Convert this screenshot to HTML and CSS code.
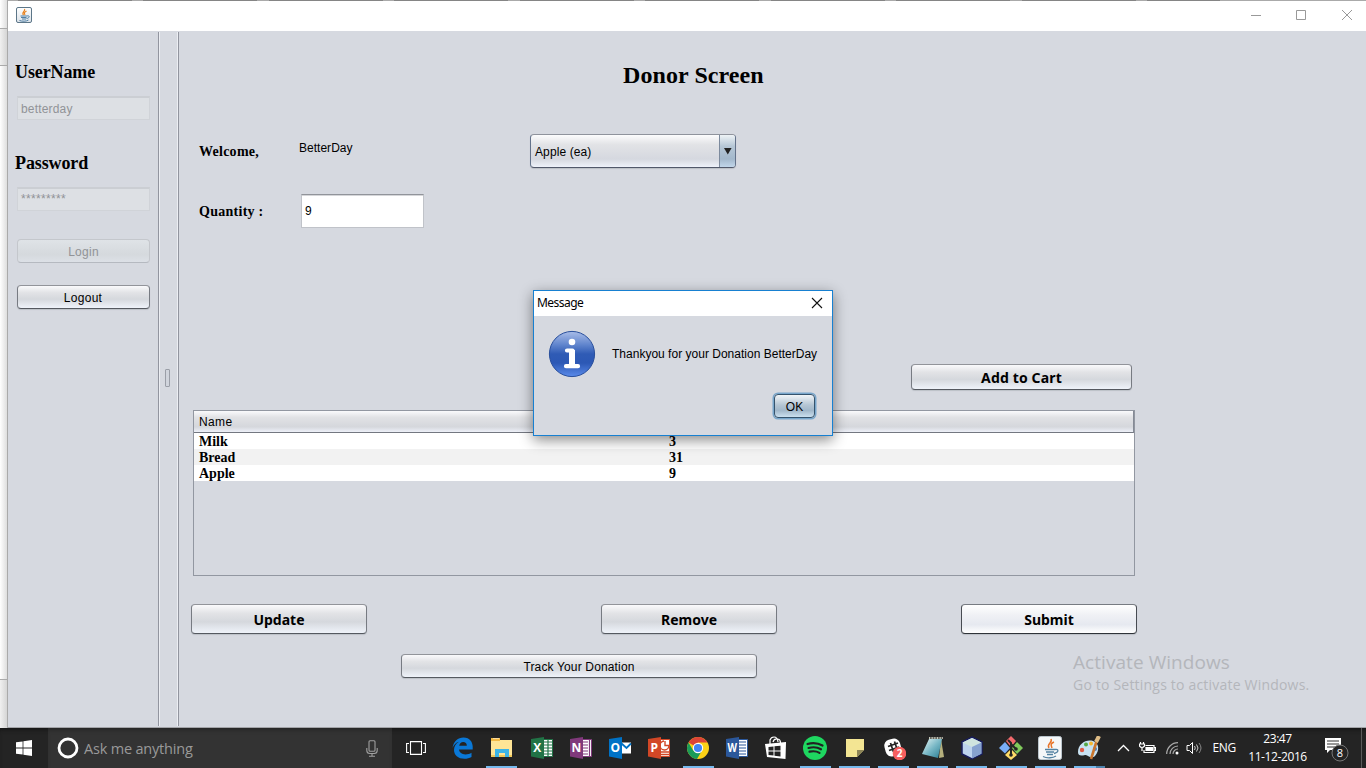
FILE: index.html
```html
<!DOCTYPE html>
<html lang="en">
<head>
<meta charset="utf-8">
<title>Donor Screen</title>
<link rel="stylesheet" href="styles.css">
</head>
<body>
<div class="desktop">
  <div class="strip"><div class="strip-top"></div><div class="strip-bar"></div><div class="strip-body"></div><div class="strip-foot"></div></div>
  <div class="window">
    <div class="tabs-edge"></div>
    <header class="titlebar">
      <svg class="java-small" viewBox="0 0 32 32" width="16" height="16"><defs><linearGradient id="jb" x2="0" y2="1"><stop stop-color="#fff"/><stop offset="1" stop-color="#dbe2e8"/></linearGradient></defs><rect x="1" y="1" width="30" height="30" rx="3" fill="url(#jb)" stroke="#5c7688" stroke-width="2"/><path d="M17 4c3 4-7 6-2 12M21 8c-5 3-5 4-3 8" fill="none" stroke="#e8821e" stroke-width="2.4"/><path d="M9 18h13M10 21h11M12 24h8M22 18c7-2 5 5-1 5M7 27c5 2 14 2 18-1" fill="none" stroke="#4f7fa5" stroke-width="2"/></svg>
      <svg class="controls" width="112" height="12" viewBox="0 0 112 12" fill="none" stroke="#999"><path d="M1 6.5h10M46.5 1.5h9v9h-9z"/><path d="M92 1l10 10M102 1l-10 10"/></svg>
    </header>
    <div class="content">
      <aside class="sidebar">
        <h2>UserName</h2>
        <div class="field off">betterday</div>
        <h2 class="second">Password</h2>
        <div class="field off stars">*********</div>
        <button class="btn small off">Login</button>
        <button class="btn small logout">Logout</button>
      </aside>
      <div class="splitter"><span class="grip"></span></div>
      <main class="main">
        <h1>Donor Screen</h1>
        <div class="row welcome"><b>Welcome,</b><span class="user">BetterDay</span><div class="combo"><span>Apple (ea)</span><i><svg width="8" height="7"><path d="M0 0h7.6L3.8 6.5z" fill="#222"/></svg></i></div></div>
        <div class="row quantity"><b>Quantity :</b><div class="input">9</div></div>
        <div class="cart"><button class="btn big">Add to Cart</button></div>
        <div class="table">
          <div class="thead"><span>Name</span></div>
          <div class="tr"><span>Milk</span><span>3</span></div>
          <div class="tr alt"><span>Bread</span><span>31</span></div>
          <div class="tr"><span>Apple</span><span>9</span></div>
        </div>
        <div class="actions"><button class="btn big">Update</button><button class="btn big">Remove</button><button class="btn big bright">Submit</button></div>
        <button class="btn small track">Track Your Donation</button>
      </main>
    </div>
    <div class="watermark"><div class="wm1">Activate Windows</div><div class="wm2">Go to Settings to activate Windows.</div></div>
    <section class="dialog">
      <div class="dialog-title"><span>Message</span><svg width="12" height="12" fill="none" stroke="#111" stroke-width="1.1"><path d="M1 1l10 10M11 1L1 11"/></svg></div>
      <div class="dialog-body">
        <svg width="48" height="48" viewBox="0 0 48 48"><defs><linearGradient id="ig" x2="0" y2="1"><stop stop-color="#a9bde8"/><stop offset=".3" stop-color="#5f84cd"/><stop offset=".5" stop-color="#2f5bb5"/><stop offset=".7" stop-color="#2c58b5"/><stop offset="1" stop-color="#5b8bea"/></linearGradient></defs><circle cx="24" cy="24" r="22.6" fill="url(#ig)" stroke="#294f9c"/><circle cx="24" cy="12" r="3.3" fill="#fff"/><path d="M19 20.5h5.500V36M18 36.2h12" fill="none" stroke="#fff" stroke-width="4.2" stroke-linecap="round" stroke-linejoin="round"/><path d="M24 20v16" stroke="#fff" stroke-width="6"/></svg>
        <span class="msg">Thankyou for your Donation BetterDay</span>
      </div>
      <div class="dialog-foot"><button class="btn small ok">OK</button></div>
    </section>
  </div>
  <footer class="taskbar">
    <div class="start"><svg width="16" height="16" fill="#fff"><path d="M0 2.3l6.6-.9v6.2H0zM7.4 1.2L16 0v7.6H7.4zM0 8.4h6.6v6.2L0 13.7zM7.4 8.4H16V16l-8.6-1.2z"/></svg></div>
    <div class="search"><svg width="22" height="22"><circle cx="11" cy="11" r="9" fill="none" stroke="#fff" stroke-width="2.8"/></svg><span>Ask me anything</span><svg class="mic" width="12" height="17" fill="none" stroke="#a0a0a0" stroke-width="1.1"><rect x="3" y=".7" width="6" height="10.6" rx="1"/><path d="M.8 8v2.5q0 3 3 3h4.4q3 0 3-3V8M6 13.5V16M3 16.2h6"/></svg></div>
    <div class="taskview"><svg width="20" height="14" fill="none" stroke="#fff" stroke-width="1.1"><path d="M4.5.6h11v12.800h-11zM3 2.500H.6v9H3M17 2.500h2.400v9H17"/></svg></div>
    <nav class="apps">
      <div class="app"><svg viewBox="0 0 24 24"><path d="M1.500 12C2.500 5 7 1.400 12.500 1.400c6.400 0 9.200 4.800 9.200 9.200v3H8c.2 3 3 4.800 6.300 4.800 2.600 0 4.700-.8 6.200-1.700v4.300c-2 1.200-4.500 1.800-7 1.800C7 22.800 3 19 3 14c0-3.400 1.800-6.500 5-8.200C5 6.500 2.800 9 1.500 12zM8.200 9.800h7.600c0-2.500-1.400-3.700-3.600-3.700-2.100 0-3.600 1.400-4 3.700z" fill="#0a78d7"/></svg></div>
      <div class="app on"><svg viewBox="0 0 24 24"><path d="M1 2h9v3H1z" fill="#f3ba45"/><path d="M3 3h6" stroke="#fff"/><path d="M1 4h21v17H1z" fill="#ffe596"/><path d="M1 3h9v2H1z" fill="#f3ba45"/><path d="M1 19h21v2H1z" fill="#f1c859"/><path d="M5 21v-8h14v8h-4v-4H9v4z" fill="#3db5e6"/></svg></div>
      <div class="app"><svg viewBox="0 0 24 24"><path d="M12 3.500h10.500v17H12z" fill="#fff" stroke="#217346"/><path d="M14 6h8M14 9h8M14 12h8M14 15h8M14 18h8M18 4v16" stroke="#217346" stroke-width="1.200"/><path d="M1 3l13-2v22L1 20.500z" fill="#217346"/><text x="7.300" y="16.300">X</text></svg></div>
      <div class="app"><svg viewBox="0 0 24 24"><path d="M12 3.500h10.500v17H12z" fill="#fff" stroke="#80397b"/><path d="M14 6h5M14 9h5M14 12h5M14 15h5M14 18h5M20.500 3v18" stroke="#80397b" stroke-width="1.200"/><path d="M1 3l13-2v22L1 20.500z" fill="#80397b"/><text x="7.300" y="16.300">N</text></svg></div>
      <div class="app"><svg viewBox="0 0 24 24"><path d="M12 6.500h11v11H12z" fill="#fff"/><path d="M13 7l5.500 5L23 7.500" fill="none" stroke="#0072c6" stroke-width="1.800"/><path d="M1 3l13-2v22L1 20.500z" fill="#0072c6"/><text x="7.300" y="16.300">O</text></svg></div>
      <div class="app"><svg viewBox="0 0 24 24"><path d="M12 3.500h10.500v17H12z" fill="#fff" stroke="#d24726"/><path d="M18 5v4.500h4A4.500 4.500 0 1 1 17 5M14 16h8M14 18.500h8" fill="none" stroke="#d24726" stroke-width="1.400"/><path d="M1 3l13-2v22L1 20.500z" fill="#d24726"/><text x="7.300" y="16.300">P</text></svg></div>
      <div class="app on"><svg viewBox="0 0 24 24"><circle cx="12" cy="12" r="11" fill="#fcd116"/><path d="M12 12L2.500 6.500A11 11 0 0 1 21.500 6.500H12z" fill="#dc4437"/><path d="M2.500 6.500A11 11 0 0 0 11 23l5-8.500-8.800 0z" fill="#1a9b58"/><circle cx="12" cy="12" r="5.200" fill="#fff"/><circle cx="12" cy="12" r="4.100" fill="#4285f4"/></svg></div>
      <div class="app"><svg viewBox="0 0 24 24"><path d="M12 3.500h10.500v17H12z" fill="#fff" stroke="#2b579a"/><path d="M14 6h7M14 9h7M14 12h7M14 15h7M14 18h7" stroke="#2b579a" stroke-width="1.200"/><path d="M1 3l13-2v22L1 20.500z" fill="#2b579a"/><text x="7.300" y="16.300" textLength="9.500" lengthAdjust="spacingAndGlyphs">W</text></svg></div>
      <div class="app"><svg viewBox="0 0 24 24"><path d="M6 8V4q1-3 4-3 3.500 0 4 5M9 6q1-4 5-3 2.500.5 2.500 4" fill="none" stroke="#fff" stroke-width="1.200"/><path d="M1 8l21-2-.5 17L3 21z" fill="#fff"/><path d="M4.500 11l5-.5v4h-5zM10.500 10.300l6-.6v4.800h-6zM4.500 15.500h5v4l-5-.6zM10.500 15.500h6v5l-6-.8z" fill="#242424"/></svg></div>
      <div class="app on"><svg viewBox="0 0 24 24"><circle cx="12" cy="12" r="12" fill="#1ed760"/><path d="M4.500 8q8-2.400 15 1.500M5.500 12q7-2 12.500 1.300M6.500 15.700q6-1.300 10 1.200" fill="none" stroke="#222" stroke-width="2.200" stroke-linecap="round"/></svg></div>
      <div class="app on"><svg viewBox="0 0 24 24"><path d="M3 3h18v11l-7 7H3z" fill="#f3e593"/><path d="M14 21v-7h7z" fill="#8d8557"/></svg></div>
      <div class="app on"><svg viewBox="0 0 24 24"><rect x="3" y="3" width="16" height="17" rx="6" fill="#fff" transform="rotate(-15 11 12)"/><path d="M8.500 7l3 9M12.500 5.500l3 9M6 10.500l10-3.500M7 14.500l10-3.500" stroke="#242424" stroke-width="1.700"/><circle cx="17.500" cy="17.500" r="6.800" fill="#f75f5f"/><text class="badge" x="17.500" y="21.300">2</text></svg></div>
      <div class="app on"><svg viewBox="0 0 24 24"><defs><linearGradient id="ng" x2="1" y2="1"><stop stop-color="#e8f5f5"/><stop offset=".5" stop-color="#79b8c6"/><stop offset="1" stop-color="#267b91"/></linearGradient></defs><path d="M20 3l3 18-5 1z" fill="#b5b07c"/><path d="M8 3h13l-4 19-16-4z" fill="url(#ng)"/><path d="M8 2h14" stroke="#c8c8b8" stroke-width="2" stroke-dasharray="1 .6"/></svg></div>
      <div class="app on"><svg viewBox="0 0 24 24"><path d="M2 6l10-5 10 5v12l-10 5-10-5z" fill="#bdd3ee" stroke="#171c5c" stroke-width="1.500"/><path d="M2.500 6.500L12 2l9.500 4.500L12 11z" fill="#cfe4df"/><path d="M12 11l9.500-4.500v11.300L12 22.500z" fill="#86a2cf"/></svg></div>
      <div class="app on"><svg viewBox="0 0 24 24"><path d="M12 0l5 5-5 6-5-6z" fill="#f2696c"/><path d="M6 6l5 6-5 5.500L0 12z" fill="#79aef8"/><path d="M18 6l6 6-6 6-5-6z" fill="#80c95b"/><path d="M12 13l6 6-6 5-6-5z" fill="#ffdc68"/><path d="M9 4l3 3v12M12 8l5 5" fill="none" stroke="#242424" stroke-width="2"/><circle cx="12" cy="19" r="1.800" fill="#242424"/><circle cx="17" cy="13" r="1.800" fill="#242424"/></svg></div>
      <div class="app on"><svg viewBox="0 0 24 24"><rect x=".5" y=".5" width="23" height="23" rx="2" fill="#f5f7f8" stroke="#bbc5cc"/><path d="M13 3c2 4-5 5-2 9M16 6c-4 2-3 3-2 6" fill="none" stroke="#e8752a" stroke-width="1.500"/><path d="M7 13.500h10M8 16h8M9 18.500h6M17 13.500c4-1 4 3-1 4M5 20.500c4 2 10 1.500 13-.5" fill="none" stroke="#5482a1" stroke-width="1.300"/></svg></div>
      <div class="app on multi"><svg viewBox="0 0 24 24"><path d="M1 16C1 8 9 3 16 5c6 2 7 9 2 15-5 4-7-2-10-1-4 1-7 1-7-3z" fill="#c8e2f2"/><circle cx="5" cy="14" r="2.200" fill="#e15a45"/><circle cx="9" cy="8.500" r="2" fill="#55a947"/><circle cx="14" cy="7.500" r="2" fill="#f5b730"/><circle cx="18" cy="13" r="2" fill="#477cc3"/><path d="M20 4l-6 19" stroke="#ca762e" stroke-width="2.600"/><path d="M22 0l-3 6" stroke="#dfbd87" stroke-width="4"/></svg></div>
    </nav>
    <div class="tray">
      <svg class="chev" width="13" height="8" fill="none" stroke="#fff" stroke-width="1.300"><path d="M1 7l5.500-5.500L12 7"/></svg>
      <svg class="bat" width="17" height="14" fill="none" stroke="#fff" stroke-width="1.200"><path d="M6.500 4.500h8.500v7H5V9M15 6.500h1.500v3H15"/><path d="M7 6.500h6.500v3H7z" fill="#fff"/><path d="M1.500 1v2M4.500 1v2M.5 3h5v2q-2.500 3-5 0zM3 6v4"/></svg>
      <svg class="wifi" width="13" height="13" fill="none" stroke="#aaa"><path d="M.7 12A11.300 11.300 0 0 1 12 .7M4 12a8 8 0 0 1 8-8M7 12a5 5 0 0 1 5-5" stroke-width="1.200"/><circle cx="11" cy="11" r="1.500" fill="#fff" stroke="none"/></svg>
      <svg class="vol" width="17" height="14" fill="none" stroke="#fff"><path d="M1 4.500h2.500l3-3v11l-3-3H1z"/><path d="M8.500 5q1.500 2 0 4M10.500 3.500q3 3.500 0 7" stroke="#ccc"/><path d="M13 2q4 5 0 10" stroke="#888"/></svg>
      <span class="lang">ENG</span>
      <div class="clock"><span>23:47</span><span class="date">11-12-2016</span></div>
      <svg class="action" width="26" height="26"><path d="M1 1h16v12H6l-3 3v-3H1z" fill="#fff"/><path d="M3 4h12M3 7h12M3 10h8" stroke="#333"/><circle cx="16" cy="16" r="8" fill="#242424" stroke="#777"/><text x="16" y="20">8</text></svg>
      <span class="peek"></span>
    </div>
  </footer>
</div>
</body>
</html>
```
FILE: styles.css
```css
* { box-sizing: border-box; }
body { margin: 0; overflow: hidden; font: 12px/14px "Liberation Sans", Arial, sans-serif; color: #000; }
.desktop { width: 1366px; height: 768px; display: grid; grid-template: 728px 40px / 8px 1358px; background: #fff; }
.strip { display: flex; flex-direction: column; border-right: 1px solid #aaa; background: linear-gradient(90deg, #fff, #dedede); }
.strip-top { height: 28px; }
.strip-bar { height: 38px; border: solid #aaa; border-width: 1px 0; background: linear-gradient(90deg, #f0f0f0, #d5d5d5); }
.strip-body { height: 613px; }
.strip-foot { height: 49px; border-top: 1px solid #aaa; background: linear-gradient(90deg, #f0f0f0, #d5d5d5); }
.window { position: relative; display: flex; flex-direction: column; background: #d6d9e0; border-bottom: 1px solid #a3a4a8; }
.tabs-edge { height: 1px; background: linear-gradient(#aaa, #aaa) 1212px 0 / 146px 1px no-repeat, repeating-linear-gradient(90deg, #aaa 0 10px, #858585 10px 124px, #aaa 124px 125.500px); }
.titlebar { height: 30px; background: #fff; display: flex; justify-content: space-between; padding: 6px 4px 0 8px; }
.controls { margin: 2px 0 0 0; }
.content { display: flex; height: 696px; }
.sidebar { width: 150px; padding: 31px 8px 0 7px; }
h1, h2 { font-family: "Liberation Serif", "Times New Roman", serif; font-weight: bold; margin: 0; }
h2 { font-size: 18px; line-height: 20px; letter-spacing: -.12px; }
.field { width: 133px; height: 24px; margin: 14px 0 0 2px; padding: 4px 3px; font-size: 12px; letter-spacing: .18px; background: #dde0e4; border: 1px solid #d0d3d8; border-top: 2px solid #cbced3; color: #919397; line-height: 14px; }
.second { margin-top: 33px; }
.field.stars { letter-spacing: .33px; padding-top: 3px; }
.btn { font-family: inherit; font-size: 12px; line-height: 14px; padding: 2px 0 0; color: #000; text-align: center; border: 1px solid; border-color: #92949a #777b82 #555960; border-radius: 4px; background: linear-gradient(#fafafc, #e2e3e6 30%, #d5d8dd 60%, #eff3fa); box-shadow: 0 1px 1px #bcc0c7; }
.sidebar .btn { display: block; width: 133px; height: 24px; margin: 28px 0 0 2px; }
.btn.off { color: #919397; letter-spacing: .25px; border-color: #c4c7cc #c4c7cc #b5b9c0; background: linear-gradient(#dfe3e7, #d5d9dd 65%, #dce0e6); box-shadow: none; }
.sidebar .logout { margin-top: 22px; letter-spacing: .3px; padding-right: 1px; }
.splitter { width: 21px; height: 694px; margin-top: 1px; display: flex; align-items: center; justify-content: center; padding: 0 3px 2px 0; border: solid #92959f; border-width: 0 1px; box-shadow: inset 1px 0 #eceef3, inset -1px 0 #eceef3; }
.grip { width: 5px; height: 18px; border: 1px solid #9a9ea7; border-radius: 1px; background: #d0d4dc; }
.main { width: 1187px; padding: 30px 0 0 12px; }
h1 { font-size: 24px; line-height: 28px; width: 142px; margin-left: 432px; white-space: nowrap; letter-spacing: .08px; }
.row { display: flex; margin-left: 8px; }
.row b { font: bold 14px/17px "Liberation Serif", serif; letter-spacing: .27px; width: 100px; padding-top: 9px; }
.welcome { margin-top: 45px; height: 34px; }
.user { padding-top: 7px; width: 231px; letter-spacing: .02px; }
.combo { width: 206px; height: 34px; display: flex; border: 1px solid; border-color: #8f939c #63728a #51586a; border-radius: 4px; overflow: hidden; background: linear-gradient(#fcfcfd, #e2e3e6 30%, #d5d8df 75%, #eef2fa); box-shadow: 0 1px 1px #bbbfc6; }
.combo span { flex: 1; padding: 10px 4px; letter-spacing: .1px; }
.combo i { width: 16px; border-left: 1px solid #7c8a9d; background: linear-gradient(#eef3f6, #b6c7d6 35%, #a3b8cc 75%, #c1d6ea); display: flex; align-items: center; justify-content: center; }
.quantity { margin-top: 26px; height: 34px; }
.input { width: 123px; height: 34px; margin-left: 2px; padding: 9px 3px; background: #fff; border: 1px solid #c0c3c9; border-top-color: #91949a; box-shadow: inset 0 1px #d5d6d9; line-height: 14px; }
.cart { margin: 136px 0 0 720px; }
.btn.big { width: 176px; height: 30px; font: bold 14px/18px "Noto Sans", sans-serif; }
.cart .btn.big { width: 221px; height: 26px; display: block; letter-spacing: .15px; }
.table { width: 942px; height: 166px; margin: 20px 0 0 2px; border: 1px solid #9297a1; }
.thead { height: 22px; padding: 4px 5px; border-bottom: 1px solid #737780; border-right: 1px solid #858a95; background: linear-gradient(#fafafc, #e1e2e5 30%, #d5d7dc 75%, #edf0f8); letter-spacing: .35px; }
.tr { display: grid; grid-template-columns: 470px 1fr; height: 16px; padding-left: 5px; background: #fff; font: bold 14px/18px "Liberation Serif", serif; }
.tr.alt { background: #f2f2f2; }
.actions { display: flex; margin-top: 28px; }
.actions .btn:nth-child(2) { margin-left: 234px; }
.actions .btn:nth-child(3) { margin-left: 184px; }
.btn.bright { border-color: #777b82 #474b52 #2f3339; background: linear-gradient(#fff, #f0f1f5 35%, #e6e9f0 70%, #fff); }
.track { width: 356px; height: 24px; display: block; margin: 20px 0 0 210px; letter-spacing: .15px; }
.watermark { position: absolute; left: 1065px; top: 649px; color: #b4b6bb; font-family: "Open Sans", sans-serif; white-space: nowrap; }
.wm1 { font-size: 19px; line-height: 26px; letter-spacing: .06px; }
.wm2 { font-size: 14px; line-height: 20px; letter-spacing: .2px; }
.dialog { position: absolute; left: 525px; top: 290px; width: 300px; height: 146px; background: #d6d9e0; border: 1px solid #1780d1; box-shadow: 0 4px 13px #0007; }
.dialog-title { height: 25px; background: #fff; display: flex; justify-content: space-between; padding: 5px 9px 0 3px; font: 12px/14px "Noto Sans", sans-serif; letter-spacing: -.55px; }
.dialog-title svg { margin-top: 1px; }
.dialog-body { display: flex; align-items: center; gap: 16px; padding: 14px 0 0 14px; }
.msg { white-space: nowrap; letter-spacing: .01px; }
.dialog-foot { display: flex; justify-content: flex-end; padding: 16px 17px 0 0; }
.ok { width: 41px; height: 24px; border-color: #35536d; background: linear-gradient(#f2f5f8, #b5c6d4 45%, #a1b7ca 70%, #cbe0ef); box-shadow: 0 0 0 1.500px #78a6cb; }
.taskbar { grid-column: 1 / 3; display: flex; background: #242424; color: #fff; font-family: "Open Sans", sans-serif; box-shadow: inset 0 4px 5px -3px #111; }
.start { width: 48px; display: flex; align-items: center; justify-content: center; }
.search { width: 344px; background: #333; display: flex; align-items: center; padding: 0 14px 0 9px; color: #999; font-size: 14.500px; line-height: 20px; box-shadow: inset 0 4px 5px -3px #222; }
.search span { margin: 2px 0 0 5px; white-space: nowrap; letter-spacing: -.19px; }
.search .mic { margin-left: auto; }
.taskview { width: 51px; padding: 13px 0 0 14px; }
.apps { display: flex; width: 664.500px; }
.app { flex: none; width: 39.120px; height: 40px; padding: 8px 7.500px 0; }
.app:nth-child(n+3) { transform: translateX(1px); }
.app > svg { width: 24px; height: 24px; display: block; }
.app.on { background: linear-gradient(#76b9ed, #76b9ed) 4px 38px / 31px 2px no-repeat; }
.app.multi { background: linear-gradient(90deg, #76b9ed 22px, #4d83ad 22px) 4px 38px / 31px 2px no-repeat; }
svg text { font: bold 12px "Open Sans", sans-serif; fill: #fff; text-anchor: middle; }
svg .badge { font-size: 10px; }
.tray { display: flex; align-items: center; flex: 1; padding-left: 9px; white-space: nowrap; }
.bat { margin-left: 9px; }
.wifi { margin-left: 10px; }
.vol { margin-left: 7px; }
.lang { width: 34px; margin-left: 10px; font-size: 12px; letter-spacing: -.4px; }
.clock { display: flex; flex-direction: column; align-items: center; width: 62px; line-height: 18px; font-size: 12px; letter-spacing: -.45px; margin-top: -1px; }
.date { letter-spacing: -.4px; }
.action { flex: none; margin: 4px 0 0 15px; }
svg.action text { font: 11px "Open Sans", sans-serif; }
.peek { height: 40px; margin-left: auto; width: 5px; border-left: 1px solid #5a5a5a; }
```
